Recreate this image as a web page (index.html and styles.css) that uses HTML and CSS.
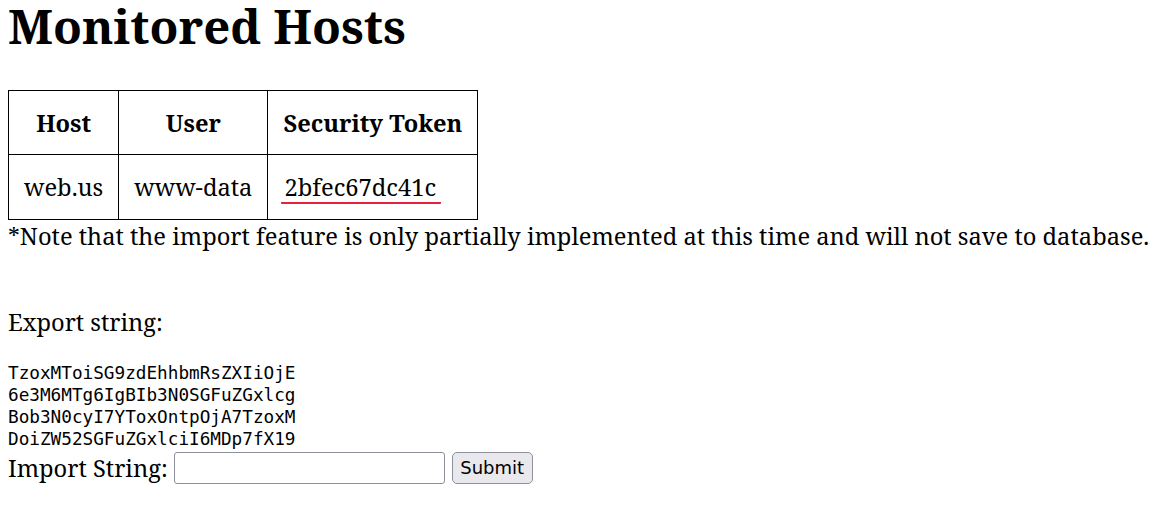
FILE: index.html
```html
<!DOCTYPE html>
<html lang="en">
<head>
<meta charset="utf-8">
<title>Monitored Hosts</title>
<link rel="stylesheet" href="styles.css">
</head>
<body>
<h1 class="title">Monitored Hosts</h1>
<table class="hosts">
  <thead>
    <tr><th>Host</th><th>User</th><th>Security Token</th></tr>
  </thead>
  <tbody>
    <tr><td>web.us</td><td>www-data</td><td class="token-cell"><span class="token">2bfec67dc41c</span></td></tr>
  </tbody>
</table>
<p class="note">*Note that the import feature is only partially implemented at this time and will not save to database.</p>
<p class="export-label">Export string:</p>
<div class="export">TzoxMToiSG9zdEhhbmRsZXIiOjE6e3M6MTg6IgBIb3N0SGFuZGxlcgBob3N0cyI7YToxOntpOjA7TzoxMDoiZW52SGFuZGxlciI6MDp7fX19</div>
<form class="import" onsubmit="return false;">
  <label class="import-label" for="imp">Import String:</label>
  <input class="import-input" id="imp" type="text">
  <button class="import-btn" type="submit">Submit</button>
</form>
</body>
</html>
```
FILE: styles.css
```css
html, body {
  background: #fff;
}
body {
  margin: 0 8px;
  font-family: "Noto Serif", "DejaVu Serif", serif;
  font-size: 23.7px;
  color: #000;
}
.title {
  font-size: 47.3px;
  font-weight: bold;
  line-height: 47px;
  margin: 2px 0 41px;
}
.hosts {
  border-collapse: collapse;
  border: 1px solid #000;
}
.hosts th,
.hosts td {
  border: 1px solid #000;
  padding: 15.5px 15px;
}
.hosts th {
  text-align: center;
  font-weight: bold;
}
.hosts td {
  text-align: left;
}
.hosts .token-cell {
  padding-left: 16px;
}
.token {
  display: inline-block;
  line-height: 29px;
  margin-left: -3px;
  padding: 0 5px 0 3px;
  border-bottom: 2px solid #e5223d;
  border-radius: 1px;
}
.note {
  margin: 0 0 54px;
}
.export-label {
  margin: 0 0 23.6px;
}
.export {
  font-family: "DejaVu Sans Mono", monospace;
  font-size: 17.7px;
  line-height: 22px;
  width: 27ch;
  word-break: break-all;
}
.import {
  margin: 0;
  padding-top: 2px;
  display: flex;
  align-items: center;
  gap: 6px;
}
.import-label {
  line-height: 32px;
}
.import-input {
  box-sizing: border-box;
  width: 271px;
  height: 32px;
  margin: 0;
  border: 1px solid #8f8f9d;
  border-radius: 3px;
  background: #fff;
  font-size: 17.7px;
}
.import-btn {
  box-sizing: border-box;
  width: 81px;
  height: 32px;
  margin: 0 0 0 1px;
  padding: 0;
  border: 1px solid #8f8f9d;
  border-radius: 5px;
  background: #e9e9ed;
  color: #000;
  font-family: "DejaVu Sans", sans-serif;
  font-size: 18px;
}
```
